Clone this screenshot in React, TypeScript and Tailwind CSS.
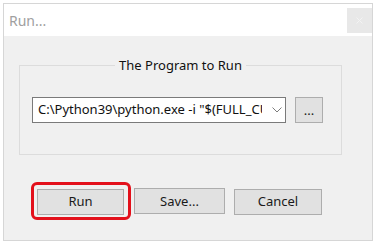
import React from 'react';

const Btn: React.FC<{ label: string; width: string }> = ({ label, width }) => (
  <button
    className={`${width} h-[26px] bg-[#e1e1e1] border border-[#adadad] text-[13px] text-[#1a1a1a] leading-none`}
  >
    {label}
  </button>
);

const App: React.FC = () => {
  return (
    <div className="w-[375px] h-[242px] bg-white p-[3px] font-['Noto_Sans','Liberation_Sans',sans-serif]">
      <div className="w-[370px] h-[238px] border border-[#d6d6d6] flex flex-col bg-[#f0f0f0]">
        {/* title bar */}
        <div className="h-[32px] bg-white flex justify-between">
          <span className="pl-[5px] pt-[8px] text-[14px] leading-[18px] text-[#a0a0a0]">Run...</span>
          <div className="mt-[4px] w-[25px] h-[25px] bg-[#e8e8e8] flex items-center justify-center">
            <svg width="7" height="7" viewBox="0 0 7 7">
              <path d="M0.5 0.5 L6.5 6.5 M6.5 0.5 L0.5 6.5" stroke="#f3f3f3" strokeWidth="1" />
            </svg>
          </div>
        </div>

        <div className="flex-1 pt-[29px] pl-[15px]">
          {/* group box */}
          <div className="w-[323px] h-[90px] border border-[#dcdcdc]">
            <div className="flex justify-center -mt-[10px]">
              <span className="bg-[#f0f0f0] px-[4px] text-[13px] leading-[18px] text-[#111]">The Program to Run</span>
            </div>
            <div className="flex mt-[23px] ml-[12px] gap-[9px]">
              <div className="w-[254px] h-[26px] bg-white border border-[#7a7a7a] flex items-center">
                <span className="pl-[5px] w-[229px] overflow-hidden whitespace-nowrap text-[13px] text-[#111]">
                  C:\Python39\python.exe -i "$(FULL_CURRENT_PATH)"
                </span>
                <svg className="ml-[10px]" width="10" height="6" viewBox="0 0 10 6">
                  <path d="M0.5 0.5 L5 5 L9.5 0.5" fill="none" stroke="#7c7c7c" strokeWidth="1" />
                </svg>
              </div>
              <button className="w-[28px] h-[26px] bg-[#e1e1e1] border border-[#adadad] text-[13px] text-[#1a1a1a] leading-none">
                ...
              </button>
            </div>
          </div>

          {/* buttons */}
          <div className="flex mt-[33px] ml-[18px] gap-[10px]">
            <div className="relative">
              <Btn label="Run" width="w-[87px]" />
              <div className="absolute -top-[6px] -left-[6px] -right-[7px] -bottom-[5px] border-[3px] border-[#e3101b] rounded-[6px]" />
            </div>
            <Btn label="Save..." width="w-[91px]" />
            <div className="-ml-[1px]">
              <Btn label="Cancel" width="w-[88px]" />
            </div>
          </div>
        </div>
      </div>
    </div>
  );
};

export default App;
